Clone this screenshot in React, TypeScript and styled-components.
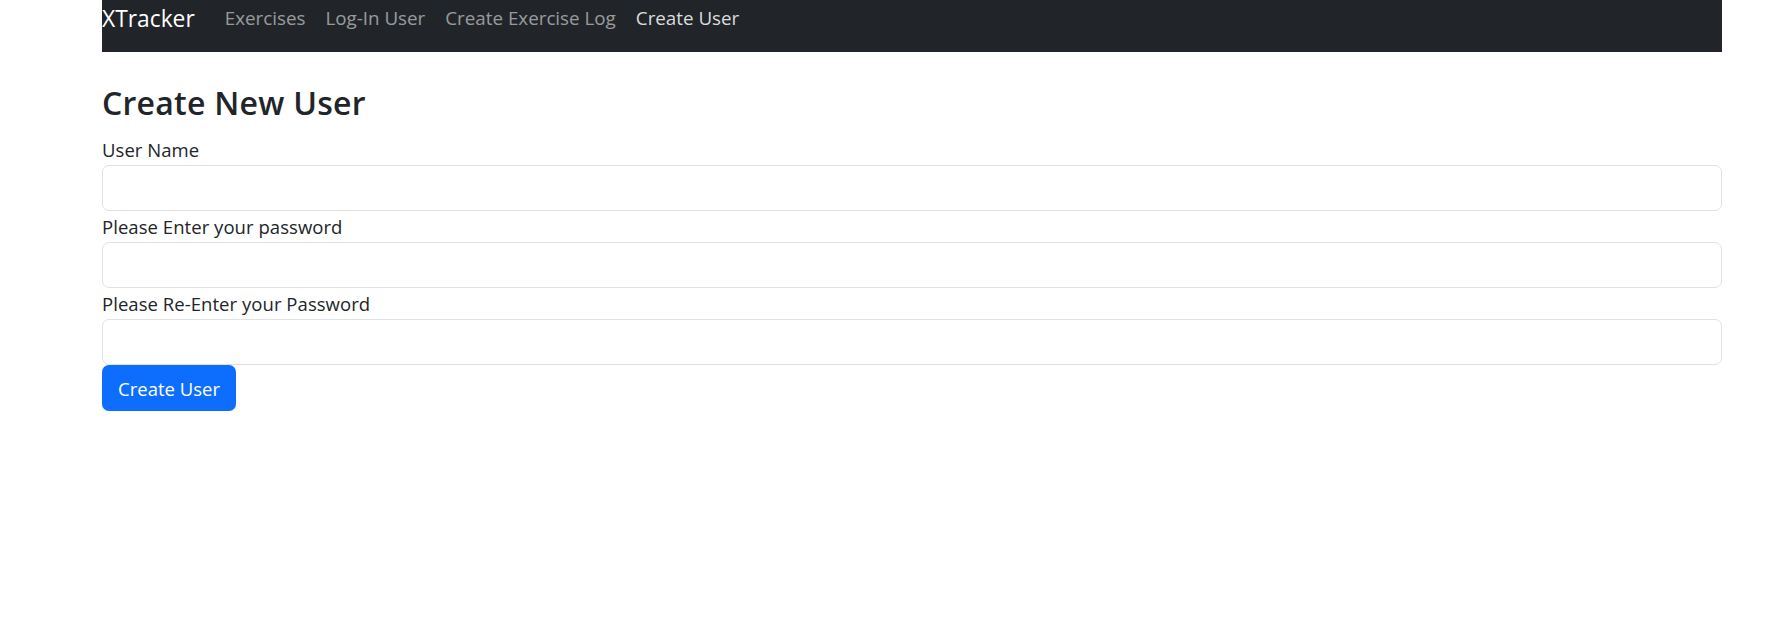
import React from "react";
import styled, { createGlobalStyle } from "styled-components";

const Global = createGlobalStyle`
  html, body { margin: 0; padding: 0; background: #fff; }
  body { font-family: "Open Sans", "Noto Sans", sans-serif; color: #212529; }
  * { box-sizing: border-box; }
`;

const Page = styled.div`
  width: 1620px;
  margin-left: 102px;
`;

const NavBar = styled.nav`
  height: 52px;
  background: #212529;
  display: flex;
  align-items: flex-start;
`;

const Brand = styled.a`
  font-size: 22.8px;
  line-height: 37px;
  color: #fff;
  text-decoration: none;
  margin-right: 20px;
`;

const NavList = styled.div`
  display: flex;
`;

const NavLink = styled.a<{ $active?: boolean }>`
  font-size: 18.8px;
  line-height: 37px;
  padding: 0 10px;
  color: ${(p) => (p.$active ? "rgba(255,255,255,0.85)" : "rgba(255,255,255,0.55)")};
  text-decoration: none;
`;

const Main = styled.main`
  padding-top: 29px;
`;

const Heading = styled.h3`
  margin: 0 0 9px;
  font-size: 32px;
  font-weight: 600;
  line-height: 44px;
  letter-spacing: 0.25px;
`;

const Form = styled.form`
  display: flex;
  flex-direction: column;
`;

const Label = styled.label`
  display: block;
  font-size: 18.5px;
  line-height: 31px;
  letter-spacing: 0.05px;
`;

const Input = styled.input`
  display: block;
  width: 100%;
  height: 46px;
  border: 1px solid #dee2e6;
  border-radius: 7px;
  background: #fff;
  font-size: 18px;
  padding: 0 14px;
  outline: none;
`;

const Button = styled.button`
  align-self: flex-start;
  height: 46px;
  width: 134px;
  padding: 0;
  border: none;
  border-radius: 7px;
  background: #0d6efd;
  color: #fff;
  font-family: inherit;
  font-size: 18.5px;
  cursor: pointer;
`;

export default function App() {
  return (
    <>
      <Global />
      <Page>
        <NavBar>
          <Brand href="#">XTracker</Brand>
          <NavList>
            <NavLink href="#">Exercises</NavLink>
            <NavLink href="#">Log-In User</NavLink>
            <NavLink href="#">Create Exercise Log</NavLink>
            <NavLink href="#" $active>Create User</NavLink>
          </NavList>
        </NavBar>
        <Main>
          <Heading>Create New User</Heading>
          <Form onSubmit={(e) => e.preventDefault()}>
            <Label>User Name</Label>
            <Input type="text" />
            <Label>Please Enter your password</Label>
            <Input type="password" />
            <Label>Please Re-Enter your Password</Label>
            <Input type="password" />
            <Button type="submit">Create User</Button>
          </Form>
        </Main>
      </Page>
    </>
  );
}
